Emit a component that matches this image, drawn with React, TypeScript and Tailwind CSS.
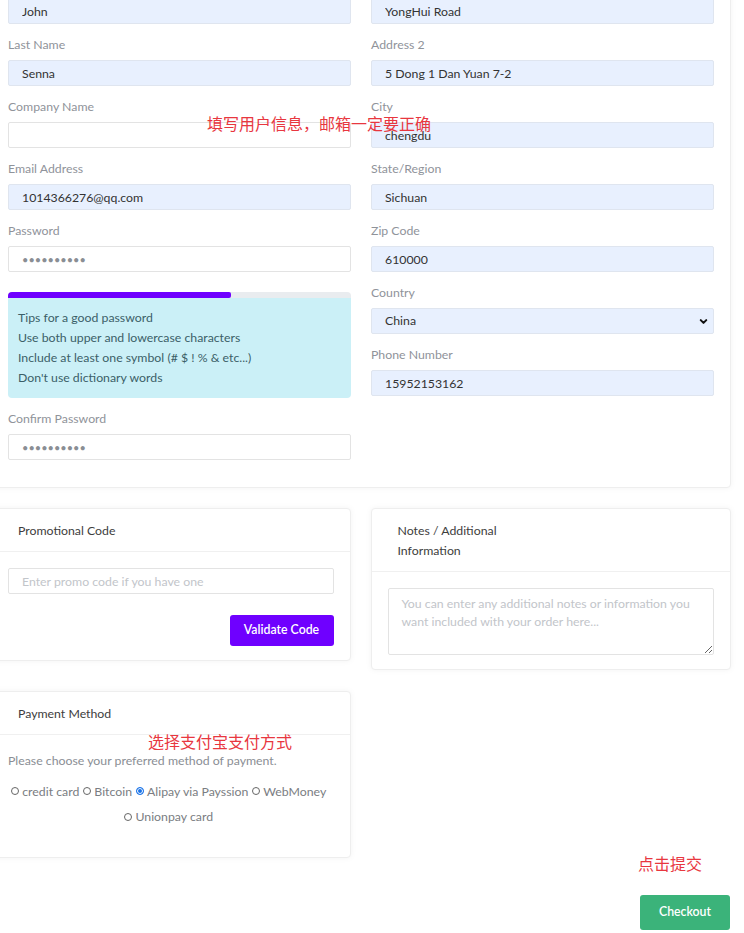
import { ChevronDown } from 'lucide-react';

const FONT = { fontFamily: 'Lato, "Noto Sans", "Noto Sans CJK SC", sans-serif' };

function Field({ label, value, type = 'text', filled = true }: { label: string; value?: string; type?: string; filled?: boolean }) {
  return (
    <div className="mb-[12px]">
      <div className="h-[18px] mb-[6px] text-[12.3px] leading-[18px] text-[#8f939a]">{label}</div>
      <input
        type={type}
        readOnly
        value={value ?? ''}
        className={`block w-full h-[26px] rounded-[2px] border px-[13px] outline-none ${
          filled ? 'bg-[#e8f0fe] border-[#dfe5ef] text-[#333] text-[12.3px]' : 'bg-white border-[#e3e3e3] text-[#8a8e94] text-[11px]'
        }`}
      />
    </div>
  );
}

function CardHeader({ children, className = '' }: { children: React.ReactNode; className?: string }) {
  return (
    <div className={`border-b border-[#f0f0f0] pt-3 pb-[10px] text-[12.3px] leading-[20px] text-[#3d3d3d] ${className}`}>
      {children}
    </div>
  );
}

function Radio({ label, checked = false }: { label: string; checked?: boolean }) {
  return (
    <span className="inline-flex items-center gap-[3px] mr-[4px]">
      <span
        className={`inline-block w-[8px] h-[8px] rounded-full border ${
          checked ? 'border-[#1a73e8] bg-[#1a73e8] ring-1 ring-inset ring-white' : 'border-[#666]'
        }`}
      />
      {label}
    </span>
  );
}

export default function App() {
  return (
    <div className="relative w-[744px] h-[933px] overflow-hidden bg-white" style={FONT}>
      <div className="-ml-[10px] -mt-[43px] w-[741px]">
        {/* Billing details card */}
        <div className="rounded-[4px] border border-[#eeeeee] bg-white shadow-[0_0_6px_rgba(0,0,0,0.05)] pt-4 pl-[17px] pr-[16px] pb-[15px]">
          <div className="grid grid-cols-2 gap-x-5">
            <div>
              <Field label="First Name" value="John" />
              <Field label="Last Name" value="Senna" />
              <Field label="Company Name" filled={false} />
              <Field label="Email Address" value="1014366276@qq.com" />
              <Field label="Password" type="password" value="1234567890" filled={false} />
              <div className="mt-[20px] mb-[12px] rounded-[4px] overflow-hidden">
                <div className="h-[6px] bg-[#e9ecef]">
                  <div className="h-full w-[65%] bg-[#6f00ff] rounded-r-[2px]" />
                </div>
                <div className="bg-[#cbf0f7] px-[10px] pt-[10px] pb-[10px] text-[12.3px] leading-[20px] text-[#3b5f68]">
                  <div>Tips for a good password</div>
                  <div>Use both upper and lowercase characters</div>
                  <div>Include at least one symbol (# $ ! % &amp; etc...)</div>
                  <div>Don't use dictionary words</div>
                </div>
              </div>
              <Field label="Confirm Password" type="password" value="1234567890" filled={false} />
            </div>
            <div>
              <Field label="Address 1" value="YongHui Road" />
              <Field label="Address 2" value="5 Dong 1 Dan Yuan 7-2" />
              <Field label="City" value="chengdu" />
              <Field label="State/Region" value="Sichuan" />
              <Field label="Zip Code" value="610000" />
              <div className="mb-[12px]">
                <div className="h-[18px] mb-[6px] text-[12.3px] leading-[18px] text-[#8f939a]">Country</div>
                <div className="relative">
                  <select
                    defaultValue="China"
                    className="block w-full h-[26px] appearance-none rounded-[2px] border border-[#dfe5ef] bg-[#e8f0fe] px-[13px] text-[12.3px] text-[#333] outline-none"
                  >
                    <option>China</option>
                  </select>
                  <ChevronDown className="pointer-events-none absolute right-[5px] top-[8px] w-[11px] h-[11px] text-[#111]" strokeWidth={4.5} />
                </div>
              </div>
              <Field label="Phone Number" value="15952153162" />
            </div>
          </div>
        </div>

        <div className="mt-[20px] grid grid-cols-2 gap-x-5 gap-y-[21px] items-start">
          {/* Promotional code */}
          <div className="rounded-[4px] border border-[#eeeeee] bg-white shadow-[0_0_6px_rgba(0,0,0,0.05)]">
            <CardHeader className="pl-[27px]">Promotional Code</CardHeader>
            <div className="pt-[16px] pl-[17px] pr-[16px] pb-[14px]">
              <input
                placeholder="Enter promo code if you have one"
                className="block w-full h-[26px] rounded-[2px] border border-[#e3e3e3] px-[13px] text-[12.3px] placeholder:text-[#c2c5ca] outline-none"
              />
              <div className="mt-[21px] flex justify-end">
                <button className="h-[31px] w-[104px] rounded-[3px] bg-[#6f00ff] text-[12.3px] font-semibold text-white">
                  Validate Code
                </button>
              </div>
            </div>
          </div>

          {/* Notes */}
          <div className="rounded-[4px] border border-[#eeeeee] bg-white shadow-[0_0_6px_rgba(0,0,0,0.05)]">
            <CardHeader className="pl-[26px]">
              Notes / Additional
              <br />
              Information
            </CardHeader>
            <div className="pt-[16px] pl-[16px] pr-[16px] pb-[14px]">
              <textarea
                placeholder="You can enter any additional notes or information you want included with your order here..."
                className="block w-full h-[67px] rounded-[2px] border border-[#e3e3e3] px-[13px] py-[6px] text-[12.3px] leading-[18px] placeholder:text-[#c2c5ca] outline-none"
              />
            </div>
          </div>

          {/* Payment method */}
          <div className="rounded-[4px] border border-[#eeeeee] bg-white shadow-[0_0_6px_rgba(0,0,0,0.05)]">
            <CardHeader className="pl-[27px]">Payment Method</CardHeader>
            <div className="pt-[17px] pl-[17px] pr-[16px] pb-[28px] text-[12.3px] text-[#8a8e94]">
              <div className="leading-[18px]">Please choose your preferred method of payment.</div>
              <div className="mt-[8px] text-center leading-[25px] text-[#7a7d82]">
                <Radio label="credit card" />
                <Radio label="Bitcoin" />
                <Radio label="Alipay via Payssion" checked />
                <Radio label="WebMoney" />
                <br />
                <Radio label="Unionpay card" />
              </div>
            </div>
          </div>
        </div>

        <div className="mt-[37px] flex justify-end pr-[1px]">
          <button className="h-[35px] w-[90px] rounded-[3px] bg-[#3bb37a] text-[12.3px] font-semibold text-white">
            Checkout
          </button>
        </div>
      </div>

      {/* red annotations */}
      <div className="absolute left-[207px] top-[114px] text-[16px] leading-[20px] text-[#e8373f]">填写用户信息，邮箱一定要正确</div>
      <div className="absolute left-[148px] top-[732px] text-[16px] leading-[20px] text-[#e8373f]">选择支付宝支付方式</div>
      <div className="absolute left-[638px] top-[854px] text-[16px] leading-[20px] text-[#e8373f]">点击提交</div>
    </div>
  );
}
